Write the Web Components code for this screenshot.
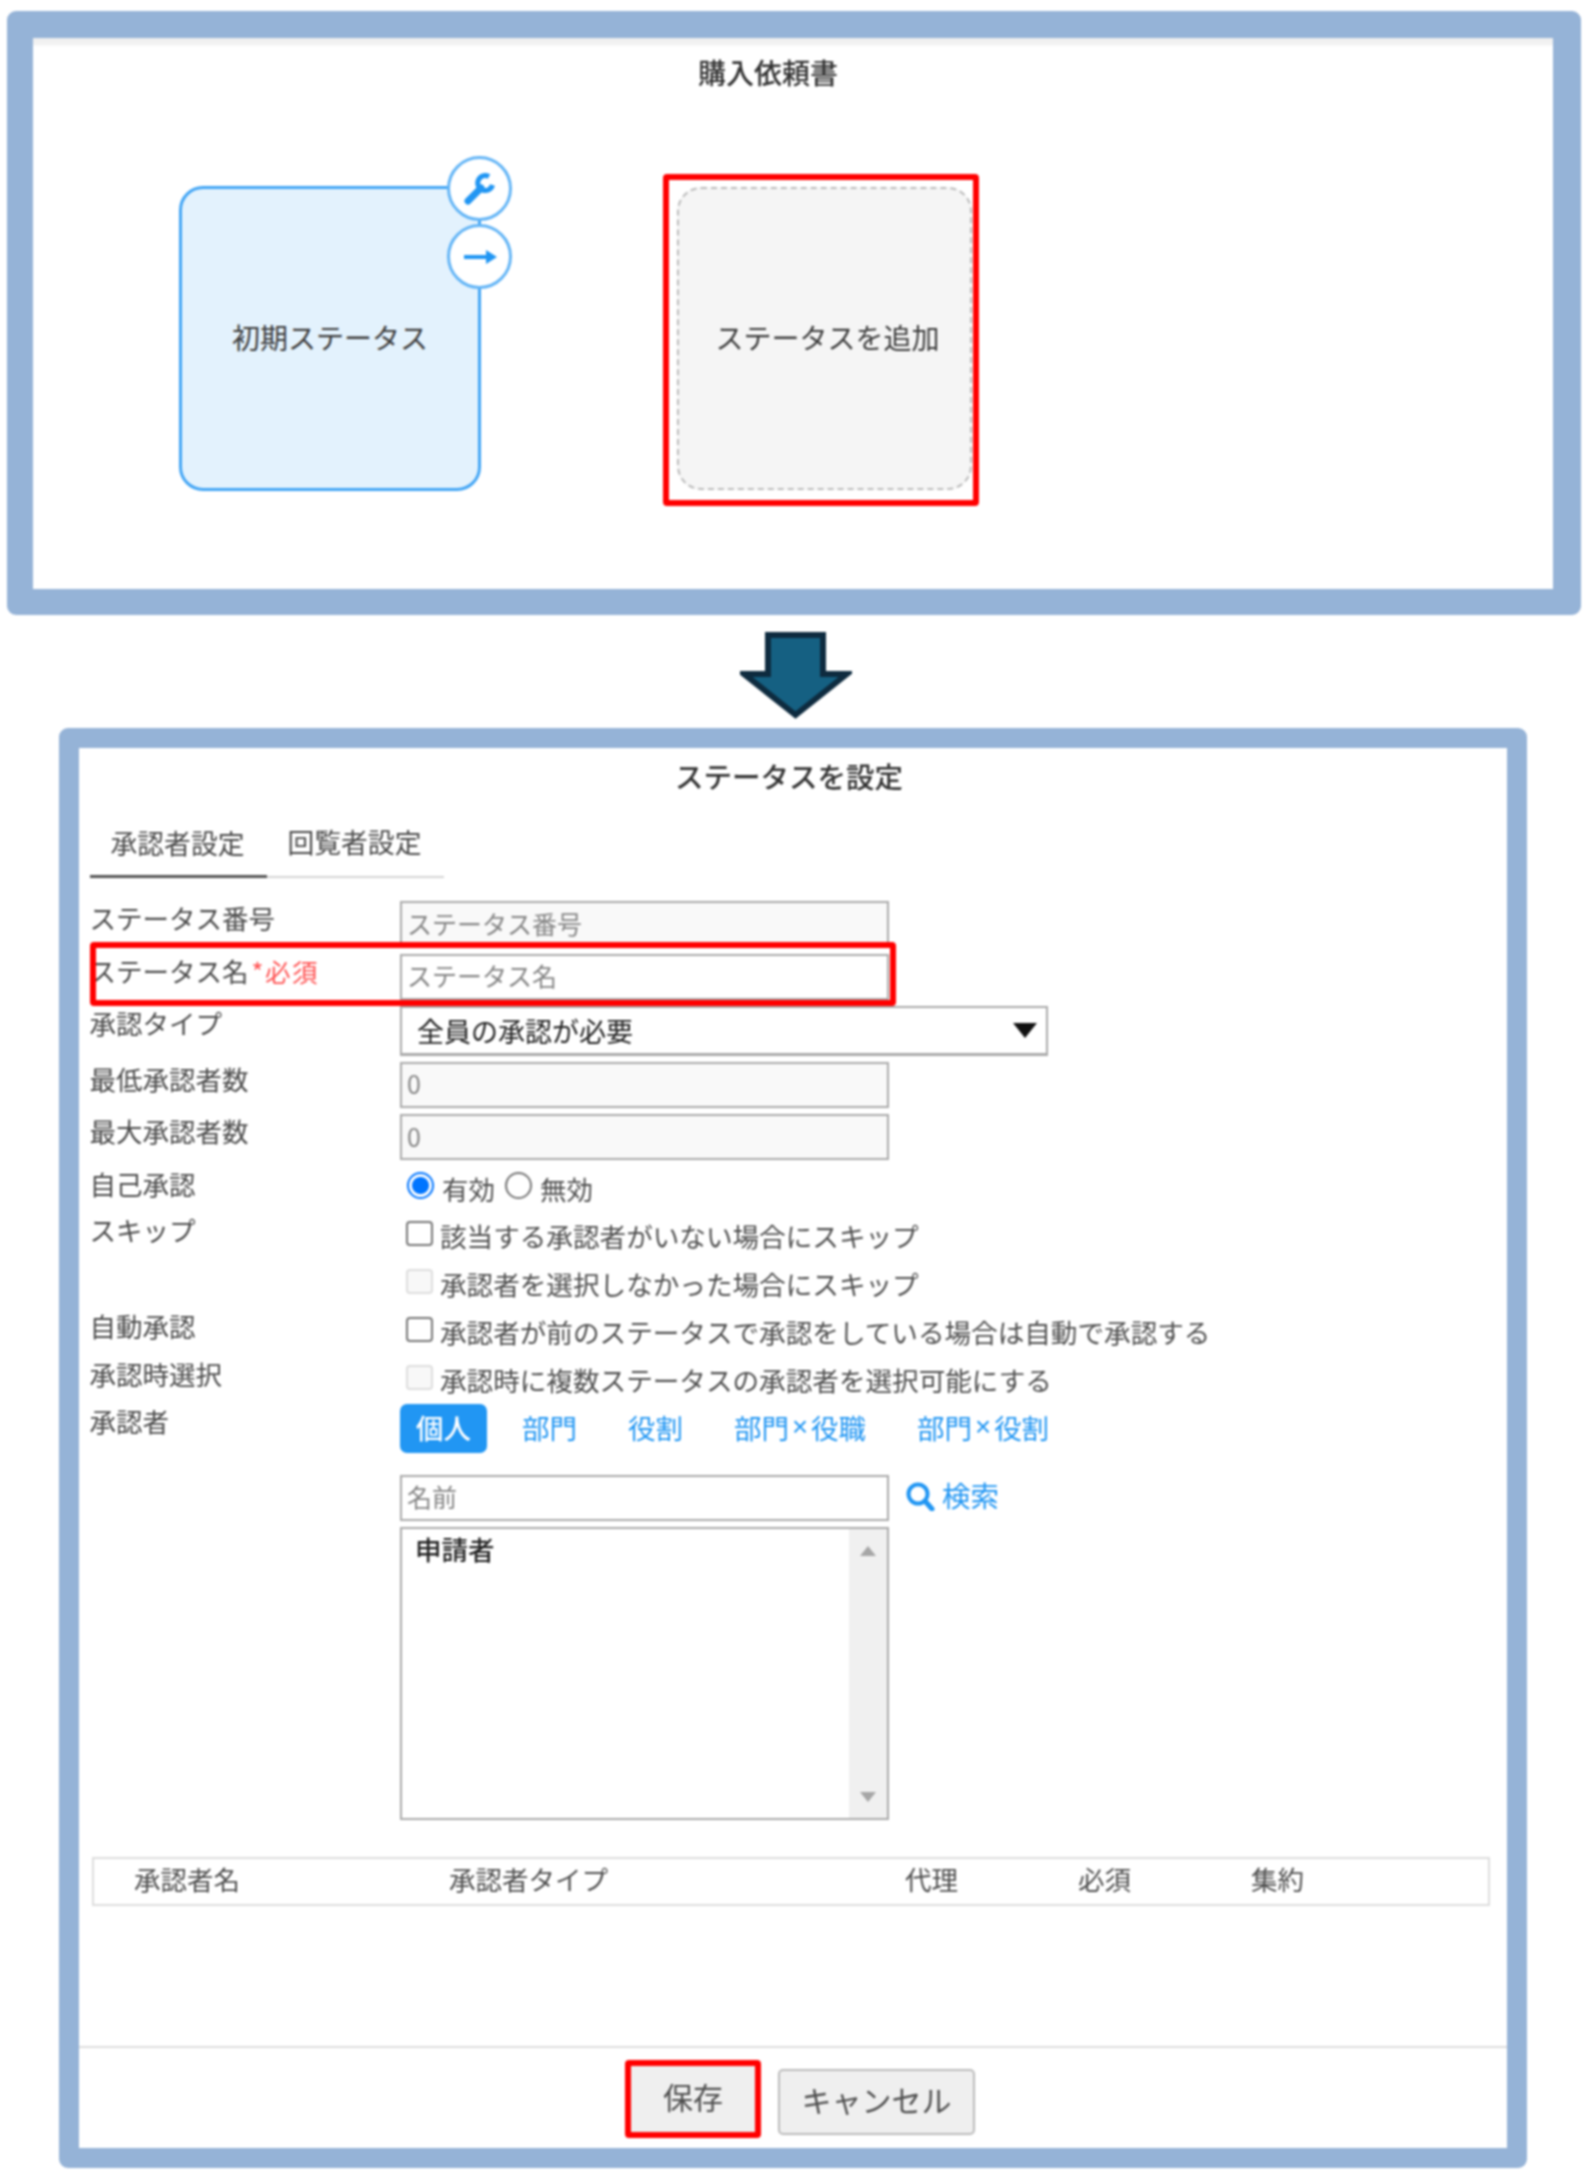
<!DOCTYPE html>
<html lang="ja">
<head>
<meta charset="utf-8">
<title>ステータスを設定</title>
<style>
  html, body { margin: 0; background: #fff; }
  body { font-family: "Noto Sans CJK JP", "Liberation Sans", sans-serif; color: #444; }
</style>
</head>
<body>
<app-page>
  <blue-panel style="width:1574px;height:604px;margin-left:7px;--right:28px">
    <status-board></status-board>
  </blue-panel>
  <down-arrow></down-arrow>
  <blue-panel style="width:1468px;height:1440px;margin-left:59px;--side:20px;--right:20.500px;--top:20px;--bottom:20px">
    <status-dialog></status-dialog>
  </blue-panel>
</app-page>

<script>
// panel with the thick blue border
class BluePanel extends HTMLElement {
  constructor() {
    super();
    const shadow = this.attachShadow({ mode: 'open' });
    shadow.innerHTML = `
      <style>
        :host { display: block; box-sizing: border-box; background: #fff; border-radius: 9px;
                border: solid #95b3d7; border-width: var(--top, 27px) var(--right, 26px) var(--bottom, 26px) var(--side, 26px); }
      </style>
      <slot></slot>`;
  }
}

class DownArrow extends HTMLElement {
  constructor() {
    super();
    const shadow = this.attachShadow({ mode: 'open' });
    shadow.innerHTML = `
      <style>
        :host { display: block; box-sizing: border-box; height: 113px; padding-top: 17px; }
        svg { display: block; margin-left: 740px; }
      </style>
      <svg width="112" height="88" viewBox="0 0 112 88">
        <path d="M28 3H83V42H107L55.500 83 4 42H28Z" fill="#156082" stroke="#0e2b3f" stroke-width="6"/>
      </svg>`;
  }
}

// blue status node with the two round buttons
class StatusNode extends HTMLElement {
  constructor() {
    super();
    const shadow = this.attachShadow({ mode: 'open' });
    shadow.innerHTML = `
      <style>
        :host { display: flex; align-items: center; justify-content: center; box-sizing: border-box; position: relative;
                width: 302px; height: 305px; margin-top: 12px; padding-bottom: 4px; background: #e3f2fd;
                border: 3.500px solid #42a5f5; border-radius: 24px; font-size: 28px; color: #3c3c3c; }
        .round { position: absolute; right: -34px; width: 65px; height: 65px; box-sizing: border-box; background: #fff;
                 border: 3px solid #64b5f6; border-radius: 50%; display: flex; align-items: center; justify-content: center; }
        .a { top: -33px; }
        .b { top: 35px; }
      </style>
      <slot></slot>
      <div class="round a">
        <svg width="32" height="32" viewBox="0 0 32 32">
          <path d="M4 28L17 15" fill="none" stroke="#2196f3" stroke-width="7" stroke-linecap="round"/>
          <path d="M25 3.500A7.500 7.500 0 1 0 28.500 12" fill="none" stroke="#2196f3" stroke-width="5"/>
        </svg>
      </div>
      <div class="round b">
        <svg width="34" height="16" viewBox="0 0 34 16"><path d="M1 6H23V1L34 8 23 15V10H1Z" fill="#2196f3"/></svg>
      </div>`;
  }
}

// grey dashed tile, the red frame comes from the board
class AddTile extends HTMLElement {
  constructor() {
    super();
    const shadow = this.attachShadow({ mode: 'open' });
    shadow.innerHTML = `
      <style>
        :host { display: flex; align-items: center; justify-content: center; box-sizing: border-box;
                width: 100%; height: 100%; padding: 0 0 4px 6px; background: #f5f5f5; border: 2px dashed #bbb;
                border-radius: 24px; font-size: 28px; color: #3c3c3c; }
      </style>
      <slot></slot>`;
  }
}

class RedFrame extends HTMLElement {
  constructor() {
    super();
    const shadow = this.attachShadow({ mode: 'open' });
    shadow.innerHTML = `
      <style>
        :host { display: block; box-sizing: border-box; border: 6.500px solid #f00; border-radius: 4px; }
      </style>
      <slot></slot>`;
  }
}

class StatusBoard extends HTMLElement {
  constructor() {
    super();
    const shadow = this.attachShadow({ mode: 'open' });
    shadow.innerHTML = `
      <style>
        :host { display: block; }
        h2 { margin: 0; height: 71px; line-height: 68px; padding-left: 665px; font-size: 28px; font-weight: 500; color: #333;
             background: linear-gradient(#eee 0, #f4f4f4 7px, #fff 8px); }
        .row { display: flex; align-items: flex-start; padding: 65px 0 0 146px; }
        .add { width: 316px; height: 332px; margin-left: 182px; padding: 7px 1px 10px 8px; }
      </style>
      <h2>購入依頼書</h2>
      <div class="row">
        <status-node>初期ステータス</status-node>
        <red-frame class="add"><add-tile>ステータスを追加</add-tile></red-frame>
      </div>`;
  }
}

// label on the left, control on the right
class FormRow extends HTMLElement {
  constructor() {
    super();
    const shadow = this.attachShadow({ mode: 'open' });
    shadow.innerHTML = `
      <style>
        :host { display: grid; grid-template-columns: 310.500px 1fr; position: relative; font-size: 26.500px; }
        .label { line-height: 33px; color: #4a4a4a; white-space: nowrap; }
      </style>
      <div class="label"><slot name="label"></slot></div>
      <div><slot></slot></div>
      <slot name="overlay"></slot>`;
  }
}

class TextField extends HTMLElement {
  constructor() {
    super();
    const shadow = this.attachShadow({ mode: 'open' });
    shadow.innerHTML = `
      <style>
        :host { display: flex; align-items: center; box-sizing: border-box; width: 489px; height: 46px; padding: 0 0 3px 5px;
                background: #fff; border: 2px solid #aaa; font-size: 25px; color: #858585; white-space: nowrap; }
        :host([readonly]) { background: #f9f9f9; }
      </style>
      <slot></slot>`;
  }
}

class SelectField extends HTMLElement {
  constructor() {
    super();
    const shadow = this.attachShadow({ mode: 'open' });
    shadow.innerHTML = `
      <style>
        :host { display: flex; align-items: center; justify-content: space-between; box-sizing: border-box; width: 648px; height: 50px;
                padding: 0 9px 1px 15px; background: #fff; border: 2px solid #aaa; border-bottom-width: 3px;
                font-size: 27px; color: #222; }
      </style>
      <slot></slot>
      <svg width="24" height="15" viewBox="0 0 24 15"><path d="M0 0H24L12 15Z" fill="#111"/></svg>`;
  }
}

class ChoiceRow extends HTMLElement {
  constructor() {
    super();
    const shadow = this.attachShadow({ mode: 'open' });
    shadow.innerHTML = `
      <style>
        :host { display: flex; align-items: center; height: 48px; margin-left: 6px; font-size: 26.600px; color: #4f4f4f; white-space: nowrap; }
        input { appearance: none; box-sizing: border-box; width: 27px; height: 25px; margin: -4px 7px 0 0; flex: none;
                background: #fff; border: 2px solid #767676; border-radius: 4px; }
        input:disabled { background: #f8f8f8; border-color: #ddd; }
      </style>
      <input type="checkbox"><slot></slot>`;
    if (this.hasAttribute('disabled')) shadow.querySelector('input').disabled = true;
  }
}

class RadioPair extends HTMLElement {
  constructor() {
    super();
    const shadow = this.attachShadow({ mode: 'open' });
    shadow.innerHTML = `
      <style>
        :host { display: flex; align-items: center; height: 44px; margin-left: 7px; font-size: 26.500px; color: #4f4f4f; }
        input { appearance: none; box-sizing: border-box; width: 27px; height: 27px; margin: -6px 0 0 0; border-radius: 50%;
                background: #fff; border: 2px solid #767676; }
        input:checked { border: 2px solid #0075ff; background: radial-gradient(circle, #0075ff 0 8px, #fff 9px); }
        span { margin: 0 10px 0 8px; }
      </style>
      <input type="radio" name="self" checked><span>有効</span>
      <input type="radio" name="self"><span>無効</span>`;
  }
}

class PillTab extends HTMLElement {
  constructor() {
    super();
    const shadow = this.attachShadow({ mode: 'open' });
    shadow.innerHTML = `
      <style>
        :host { display: flex; align-items: center; box-sizing: border-box; height: 49px; padding: 0 16px 3px; border-radius: 7px; font-size: 27.500px; color: #2196f3; white-space: nowrap; }
        :host([active]) { background: #2196f3; color: #fff; font-weight: 500; }
      </style>
      <slot></slot>`;
  }
}

class ListBox extends HTMLElement {
  constructor() {
    super();
    const shadow = this.attachShadow({ mode: 'open' });
    shadow.innerHTML = `
      <style>
        :host { display: flex; box-sizing: border-box; width: 489px; height: 293px; margin-top: 6px; background: #fff; border: 2px solid #aaa; }
        .items { flex: 1; padding: 0 0 0 13px; font-size: 26.500px; font-weight: 500; color: #222; }
        .bar { width: 38px; background: #f0f0f0; display: flex; flex-direction: column; justify-content: space-between; align-items: center; padding: 17px 0 16px; box-sizing: border-box; }
      </style>
      <div class="items"><slot></slot></div>
      <div class="bar">
        <svg width="16" height="10" viewBox="0 0 16 10"><path d="M8 0L16 10H0Z" fill="#a6a6a6"/></svg>
        <svg width="16" height="10" viewBox="0 0 16 10"><path d="M0 0H16L8 10Z" fill="#a6a6a6"/></svg>
      </div>`;
  }
}

class SearchLink extends HTMLElement {
  constructor() {
    super();
    const shadow = this.attachShadow({ mode: 'open' });
    shadow.innerHTML = `
      <style>
        :host { display: flex; align-items: center; height: 40px; gap: 7px; margin-left: 17px; font-size: 28.500px; color: #2196f3; }
      </style>
      <svg width="29" height="29" viewBox="0 0 29 29" style="margin-top:3px"><circle cx="12" cy="12" r="9.500" fill="none" stroke="#2196f3" stroke-width="4"/><path d="M19 19l7 8" stroke="#2196f3" stroke-width="5" stroke-linecap="round"/></svg>
      <slot></slot>`;
  }
}

class ApproverHeader extends HTMLElement {
  constructor() {
    super();
    const shadow = this.attachShadow({ mode: 'open' });
    shadow.innerHTML = `
      <style>
        :host { display: grid; grid-template-columns: 315px 456px 173px 173px 1fr; align-items: center; box-sizing: border-box;
                width: 1398px; height: 49px; margin: 37px 0 0 2.500px; padding: 0 0 7px 40px; border: 2px solid #ddd;
                font-size: 26.500px; color: #4f4f4f; }
      </style>
      <span>承認者名</span><span>承認者タイプ</span><span>代理</span><span>必須</span><span>集約</span>`;
  }
}

class DialogButton extends HTMLElement {
  constructor() {
    super();
    const shadow = this.attachShadow({ mode: 'open' });
    shadow.innerHTML = `
      <style>
        :host { display: flex; align-items: center; justify-content: center; box-sizing: border-box; height: 100%; padding-bottom: 5px;
                background: #efefef; border: 2px solid #bbb; border-radius: 5px; font-size: 30px; color: #4f4f4f; }
      </style>
      <slot></slot>`;
  }
}

class StatusDialog extends HTMLElement {
  constructor() {
    super();
    const shadow = this.attachShadow({ mode: 'open' });
    shadow.innerHTML = `
      <style>
        :host { display: block; }
        h2 { margin: 0; height: 58px; line-height: 55px; padding-left: 596px; font-size: 28.500px; font-weight: 500; color: #333; }
        .body { padding: 0 0 0 10.500px; }
        .tabs { display: flex; width: 354.500px; height: 72px; box-sizing: border-box; border-bottom: 2px solid #d5d5d5; }
        .tab { display: flex; align-items: center; height: 71px; box-sizing: border-box; padding: 0 21px 0 20px; font-size: 26.800px; color: #4a4a4a; white-space: nowrap; }
        .tab.on { border-bottom: 3px solid #555; border-top: 3px solid transparent; height: 72px; padding-right: 23px; padding-left: 21px; }
        .flag { color: #ff5252; font-size: 25.500px; letter-spacing: 1.500px; margin-left: 3px; }
        .over { position: absolute; left: 0; top: -11.500px; width: 806.500px; height: 64px; z-index: 1; }
        .pills { display: flex; gap: 19px; }
        .x { font-family: "Liberation Sans", sans-serif; font-style: normal; margin: 0 3px; }
        .search { display: flex; margin-top: 21.500px; }
        .foot { display: flex; align-items: flex-start; justify-content: center; box-sizing: border-box; height: 101.500px; margin-top: 140px; padding: 12px 0 0 14px; gap: 17px; border-top: 2px solid #ddd; }
        .save { width: 136px; height: 78px; }
        .cancel { width: 197px; height: 66px; margin-top: 9px; }
      </style>
      <h2>ステータスを設定</h2>
      <div class="body">
        <div class="tabs">
          <div class="tab on">承認者設定</div>
          <div class="tab">回覧者設定</div>
        </div>
        <div style="height:23px"></div>
        <form-row style="height:52.500px"><span slot="label">ステータス番号</span><text-field readonly>ステータス番号</text-field></form-row>
        <form-row style="height:52.500px">
          <span slot="label">ステータス名<span class="flag">*必須</span></span>
          <text-field>ステータス名</text-field>
          <red-frame slot="overlay" class="over"></red-frame>
        </form-row>
        <form-row style="height:55.500px"><span slot="label">承認タイプ</span><select-field>全員の承認が必要</select-field></form-row>
        <form-row style="height:52.500px"><span slot="label">最低承認者数</span><text-field readonly>0</text-field></form-row>
        <form-row style="height:52.500px"><span slot="label">最大承認者数</span><text-field readonly>0</text-field></form-row>
        <form-row style="height:44.500px"><span slot="label">自己承認</span><radio-pair></radio-pair></form-row>
        <form-row style="height:48px"><span slot="label" style="position:relative;top:2px">スキップ</span><choice-row>該当する承認者がいない場合にスキップ</choice-row></form-row>
        <form-row style="height:48px"><choice-row disabled>承認者を選択しなかった場合にスキップ</choice-row></form-row>
        <form-row style="height:48px"><span slot="label" style="position:relative;top:2px">自動承認</span><choice-row>承認者が前のステータスで承認をしている場合は自動で承認する</choice-row></form-row>
        <form-row style="height:49px"><span slot="label" style="position:relative;top:2px">承認時選択</span><choice-row disabled>承認時に複数ステータスの承認者を選択可能にする</choice-row></form-row>
        <form-row>
          <span slot="label">承認者</span>
          <div>
            <div class="pills">
              <pill-tab active>個人</pill-tab><pill-tab>部門</pill-tab><pill-tab>役割</pill-tab><pill-tab>部門<i class="x">×</i>役職</pill-tab><pill-tab>部門<i class="x">×</i>役割</pill-tab>
            </div>
            <div class="search"><text-field>名前</text-field><search-link>検索</search-link></div>
            <list-box>申請者</list-box>
          </div>
        </form-row>
        <approver-header></approver-header>
      </div>
      <div class="foot">
        <red-frame class="save"><dialog-button style="border:0;border-radius:0">保存</dialog-button></red-frame>
        <dialog-button class="cancel">キャンセル</dialog-button>
      </div>`;
  }
}

// page root, the reference is an enlarged screenshot so everything is a little soft
class AppPage extends HTMLElement {
  constructor() {
    super();
    const shadow = this.attachShadow({ mode: 'open' });
    shadow.innerHTML = `
      <style>
        :host { display: block; height: 2179px; overflow: hidden; box-sizing: border-box; padding-top: 11px; filter: blur(.8px); }
      </style>
      <slot></slot>`;
  }
}

// children first, then the parents that stamp them
customElements.define('blue-panel', BluePanel);
customElements.define('down-arrow', DownArrow);
customElements.define('status-node', StatusNode);
customElements.define('add-tile', AddTile);
customElements.define('red-frame', RedFrame);
customElements.define('status-board', StatusBoard);
customElements.define('form-row', FormRow);
customElements.define('text-field', TextField);
customElements.define('select-field', SelectField);
customElements.define('choice-row', ChoiceRow);
customElements.define('radio-pair', RadioPair);
customElements.define('pill-tab', PillTab);
customElements.define('list-box', ListBox);
customElements.define('search-link', SearchLink);
customElements.define('approver-header', ApproverHeader);
customElements.define('dialog-button', DialogButton);
customElements.define('status-dialog', StatusDialog);
customElements.define('app-page', AppPage);
</script>
</body>
</html>
